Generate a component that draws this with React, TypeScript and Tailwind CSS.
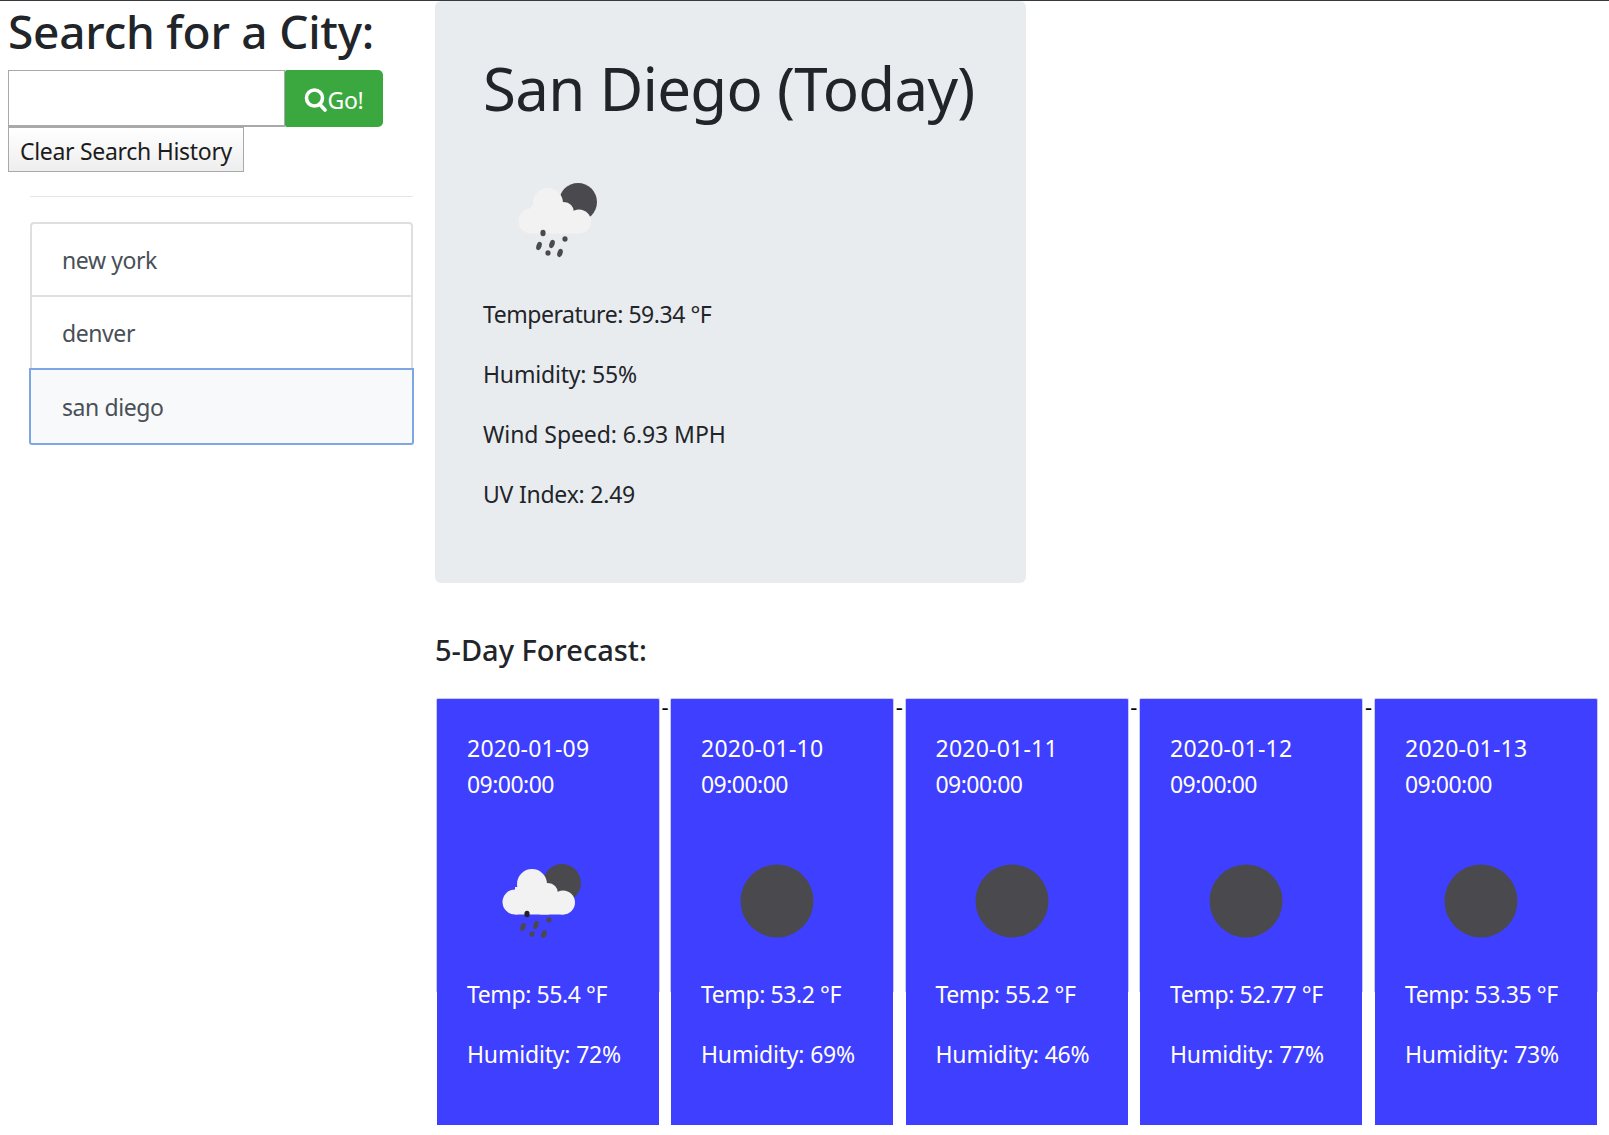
const forecast = [
  { date: '2020-01-09', temp: '55.4', humidity: '72', rain: true },
  { date: '2020-01-10', temp: '53.2', humidity: '69', rain: false },
  { date: '2020-01-11', temp: '55.2', humidity: '46', rain: false },
  { date: '2020-01-12', temp: '52.77', humidity: '77', rain: false },
  { date: '2020-01-13', temp: '53.35', humidity: '73', rain: false },
];

const cities = ['new york', 'denver', 'san diego'];

function RainIcon({ dark }: { dark?: boolean }) {
  return (
    <svg width="110" height="100" viewBox="0 0 110 100" className="block">
      <circle cx="72" cy="32" r="19" fill="#4a4a4e" />
      <g fill="#f2f2f2">
        <circle cx="25" cy="51" r="12.5" />
        <circle cx="42" cy="33" r="15" />
        <circle cx="58" cy="42" r="10" />
        <circle cx="73" cy="51.5" r="12" />
        <rect x="25" y="36" width="34" height="27.5" />
        <rect x="50" y="45" width="24" height="18.5" />
      </g>
      <g fill="#4a4a4e">
        <ellipse cx="37" cy="63" rx="2.6" ry="3.2" fill={dark ? '#222228' : '#4a4a4e'} />
        <ellipse cx="33" cy="76" rx="2.6" ry="4.2" transform="rotate(18 33 76)" />
        <ellipse cx="46" cy="74" rx="2.6" ry="4.2" transform="rotate(18 46 74)" />
        <ellipse cx="59" cy="69" rx="2.6" ry="2.8" />
        <ellipse cx="42" cy="83" rx="2.6" ry="2.8" />
        <ellipse cx="54" cy="83" rx="2.6" ry="4.2" transform="rotate(18 54 83)" />
      </g>
    </svg>
  );
}

function ClearIcon() {
  return (
    <svg width="110" height="100" viewBox="0 0 110 100" className="block">
      <circle cx="53" cy="50" r="36.5" fill="#4a4a4e" />
    </svg>
  );
}

function ForecastCard({ date, temp, humidity, rain }: (typeof forecast)[number]) {
  return (
    <div className="relative w-[222px] h-[426px] shrink-0 bg-[#3f3fff] text-white pt-[31px] pl-[30px] text-[23px] leading-[36px]">
      {/* card border that stops short of the blue fill */}
      <div className="absolute -left-px -top-px w-[224px] h-[294px] border border-b-0 border-[#c9cbf7] rounded-t-[2px] pointer-events-none" />
      <p className="tracking-[0.01em]">{date}</p>
      <p className="tracking-[-0.024em]">09:00:00</p>
      <div className="ml-[23px] mt-[49px] h-[100px]">
        {rain ? <RainIcon dark /> : <ClearIcon />}
      </div>
      <p className="mt-[25px] tracking-[-0.018em]">Temp: {temp} °F</p>
      <p className="mt-[24px] tracking-[-0.008em]">Humidity: {humidity}%</p>
    </div>
  );
}

export default function App() {
  return (
    <div className="min-h-[1135px] border-t border-[#343a40] bg-white text-[#212529] font-['Noto_Sans',sans-serif] flex">
      <aside className="w-[435px] shrink-0">
        <h2 className="pl-[8px] h-[69px] text-[46px] leading-[60px] font-medium tracking-[-0.005em] whitespace-nowrap">
          Search for a City:
        </h2>
        <div className="pl-[8px] flex">
          <input className="w-[277px] h-[57px] border border-[#a9a9a9] border-b-2 bg-white" />
          <button className="w-[98px] h-[57px] pt-[3px] flex items-center justify-center rounded-r-[5px] rounded-l-[2px] bg-[#3ba83f] text-white text-[23px] tracking-[-0.01em]">
            <svg width="23" height="25" viewBox="0 0 23 25" className="shrink-0">
              <circle cx="10.5" cy="10" r="8" fill="none" stroke="white" strokeWidth="3.6" />
              <path d="M15.5 16l5.5 6" stroke="white" strokeWidth="3.6" strokeLinecap="round" />
            </svg>
            Go!
          </button>
        </div>
        <div className="pl-[8px]">
          <button className="w-[236px] h-[45px] pt-[3px] border border-[#a9a9a9] bg-gradient-to-b from-white to-[#eeeeee] text-[23px] tracking-[-0.013em] text-[#1c1c1c] whitespace-nowrap">
            Clear Search History
          </button>
        </div>
        <div className="ml-[30px] w-[383px]">
          <hr className="mt-[24px] border-t border-[#e6e6e6]" />
          <ul className="mt-[25px] text-[#495057] text-[23px] tracking-[-0.018em]">
            {cities.map((city, i) => (
              <li
                key={city}
                className={
                  i === 2
                    ? 'h-[77px] -mt-[2px] -mx-px pt-[2px] flex items-center pl-[31px] border-2 border-[#7fa6e4] rounded-b-[3px] bg-[#f8f9fa] relative'
                    : i === 0
                      ? 'h-[75px] pt-[2px] flex items-center pl-[30px] border-2 border-[#dfdfdf] rounded-t-[4px]'
                      : 'h-[75px] -mt-[2px] pt-[2px] flex items-center pl-[30px] border-2 border-[#dfdfdf]'
                }
              >
                {city}
              </li>
            ))}
          </ul>
        </div>
      </aside>

      <main className="flex-1">
        <section className="w-[591px] h-[582px] bg-[#e9ecef] rounded-[6px] pl-[48px] pt-[51px]">
          <h1 className="text-[60px] leading-[72px] tracking-[-0.012em] whitespace-nowrap">San Diego (Today)</h1>
          <div className="ml-[23px] mt-[46px] h-[100px]">
            <RainIcon />
          </div>
          <div className="text-[23px] leading-[36px] mt-[26px] flex flex-col gap-[24px]">
            <p className="tracking-[-0.02em]">Temperature: 59.34 °F</p>
            <p className="tracking-[-0.008em]">Humidity: 55%</p>
            <p className="tracking-[-0.003em]">Wind Speed: 6.93 MPH</p>
            <p className="tracking-[-0.01em]">UV Index: 2.49</p>
          </div>
        </section>

        <h5 className="mt-[49px] text-[29px] leading-[36px] font-medium">5-Day Forecast:</h5>

        <div className="mt-[31px] ml-[2px] flex">
          {forecast.map((day, i) => (
            <div key={day.date} className="flex">
              <ForecastCard {...day} />
              {i < 4 && (
                <span className={`${i === 0 ? 'w-[12px]' : i === 3 ? 'w-[13px]' : 'w-[12.5px]'} text-center text-[22px] leading-[14px] text-black`}>
                  -
                </span>
              )}
            </div>
          ))}
        </div>
      </main>
    </div>
  );
}
